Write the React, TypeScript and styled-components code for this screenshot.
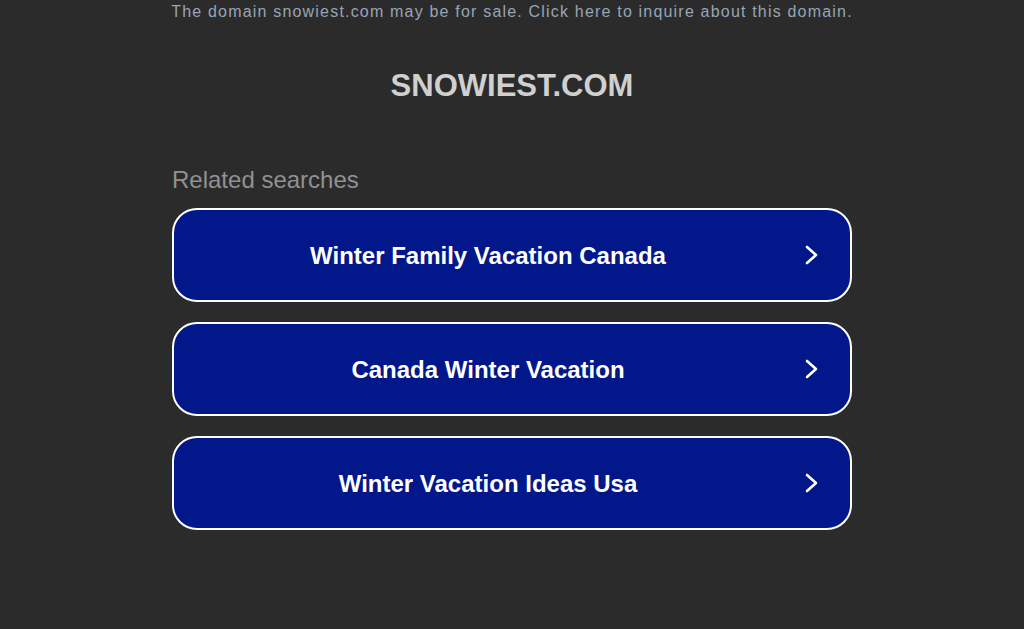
import React from "react";
import styled, { createGlobalStyle } from "styled-components";

const Global = createGlobalStyle`
  html, body { margin: 0; padding: 0; background: #2b2b2b; }
  body { font-family: "Liberation Sans", Arial, sans-serif; }
`;

const Page = styled.div`
  width: 1024px;
  height: 629px;
  background: #2b2b2b;
  display: flex;
  flex-direction: column;
  align-items: center;
`;

const Notice = styled.div`
  margin-top: 3px;
  font-family: "Liberation Sans", Arial, sans-serif;
  font-size: 16px;
  line-height: 18px;
  letter-spacing: 1.19px;
  color: #97a5b6;
  white-space: nowrap;
`;

const Title = styled.h1`
  margin: 48px 0 0;
  font-size: 31px;
  line-height: 34px;
  font-weight: bold;
  color: #d0d0d0;
`;

const Content = styled.div`
  width: 680px;
  margin-top: 63px;
  display: flex;
  flex-direction: column;
`;

const Related = styled.div`
  font-size: 24px;
  line-height: 28px;
  color: #919191;
  margin-bottom: 14px;
`;

const List = styled.div`
  display: flex;
  flex-direction: column;
  gap: 20px;
`;

const Item = styled.a`
  box-sizing: border-box;
  height: 94px;
  border: 2px solid #ffffff;
  border-radius: 25px;
  background: #021789;
  display: flex;
  align-items: center;
  padding: 2px 28px 0 0;
  text-decoration: none;
  color: #ffffff;
`;

const Label = styled.span`
  flex: 1;
  text-align: center;
  font-size: 24px;
  font-weight: bold;
`;

const Arrow = styled.svg`
  width: 20px;
  height: 24px;
  flex: none;
  margin-top: -2px;
`;

const items = [
  "Winter Family Vacation Canada",
  "Canada Winter Vacation",
  "Winter Vacation Ideas Usa",
];

export default function App() {
  return (
    <Page>
      <Global />
      <Notice>The domain snowiest.com may be for sale. Click here to inquire about this domain.</Notice>
      <Title>SNOWIEST.COM</Title>
      <Content>
        <Related>Related searches</Related>
        <List>
          {items.map((t) => (
            <Item key={t} href="#">
              <Label>{t}</Label>
              <Arrow viewBox="0 0 20 24">
                <path d="M5 4 L14 12 L5 20" fill="none" stroke="#fff" strokeWidth="2.6" strokeLinecap="round" strokeLinejoin="round" />
              </Arrow>
            </Item>
          ))}
        </List>
      </Content>
    </Page>
  );
}
